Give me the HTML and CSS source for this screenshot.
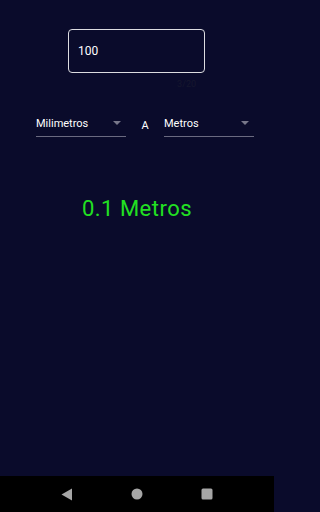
FILE: index.html
```html
<!DOCTYPE html>
<html lang="es">
<head>
<meta charset="utf-8">
<link rel="stylesheet" href="styles.css">
</head>
<body>
<div class="screen">
  <main class="content">
    <div class="field-wrap">
      <div class="field">100</div>
      <div class="counter">3/20</div>
    </div>
    <div class="selects">
      <div class="select">
        <span>Milimetros</span>
        <svg class="arrow" width="8" height="4" viewBox="0 0 8 4"><path d="M0 0h8L4 4z" fill="#77778a"/></svg>
      </div>
      <div class="sep">A</div>
      <div class="select">
        <span>Metros</span>
        <svg class="arrow" width="8" height="4" viewBox="0 0 8 4"><path d="M0 0h8L4 4z" fill="#77778a"/></svg>
      </div>
    </div>
    <div class="result">0.1 Metros</div>
  </main>
  <nav class="navbar">
    <svg width="12" height="13" viewBox="0 0 12 13"><path d="M11 0.5v12L0.5 6.5z" fill="#a6a6a6"/></svg>
    <svg width="12" height="12" viewBox="0 0 12 12"><circle cx="6" cy="6" r="5.5" fill="#a6a6a6"/></svg>
    <svg width="12" height="12" viewBox="0 0 12 12"><rect x="0.5" y="0.5" width="11" height="11" rx="1.5" fill="#a6a6a6"/></svg>
  </nav>
</div>
</body>
</html>
```
FILE: styles.css
```css
html, body {
  margin: 0;
  padding: 0;
}
body {
  width: 274px;
  height: 512px;
  overflow: hidden;
  font-family: Roboto, "Noto Sans", sans-serif;
  background: #0a0b2b;
}
.screen {
  display: flex;
  flex-direction: column;
  height: 512px;
}
.content {
  flex: 1;
  display: flex;
  flex-direction: column;
  align-items: center;
  padding-top: 29px;
}
.field-wrap {
  display: flex;
  flex-direction: column;
  width: 137px;
  margin-right: 1px;
}
.field {
  box-sizing: border-box;
  height: 44px;
  border: 1.5px solid #dcdce0;
  border-radius: 4px;
  color: #ffffff;
  font-size: 12px;
  padding-left: 9px;
  display: flex;
  align-items: center;
}
.counter {
  align-self: flex-end;
  margin-right: 9px;
  margin-top: 6px;
  font-size: 9px;
  color: #16172e;
  line-height: 11px;
}
.selects {
  margin-top: 23px;
  margin-left: 16px;
  display: flex;
  align-items: flex-end;
  width: 218px;
}
.select {
  box-sizing: border-box;
  width: 90px;
  height: 24px;
  border-bottom: 1px solid #6a6a80;
  display: flex;
  align-items: center;
  justify-content: space-between;
  padding-right: 5px;
  color: #ffffff;
  font-size: 11px;
  padding-bottom: 3px;
}
.sep {
  width: 38px;
  text-align: center;
  color: #ffffff;
  font-size: 11px;
  padding-bottom: 2px;
  line-height: 18px;
}
.result {
  margin-top: 59px;
  color: #22e022;
  font-size: 22px;
  letter-spacing: 0.5px;
  line-height: 26px;
}
.navbar {
  height: 36px;
  background: #000000;
  display: flex;
  align-items: center;
  justify-content: center;
  gap: 58px;
}
.navbar svg {
  display: block;
}
```
